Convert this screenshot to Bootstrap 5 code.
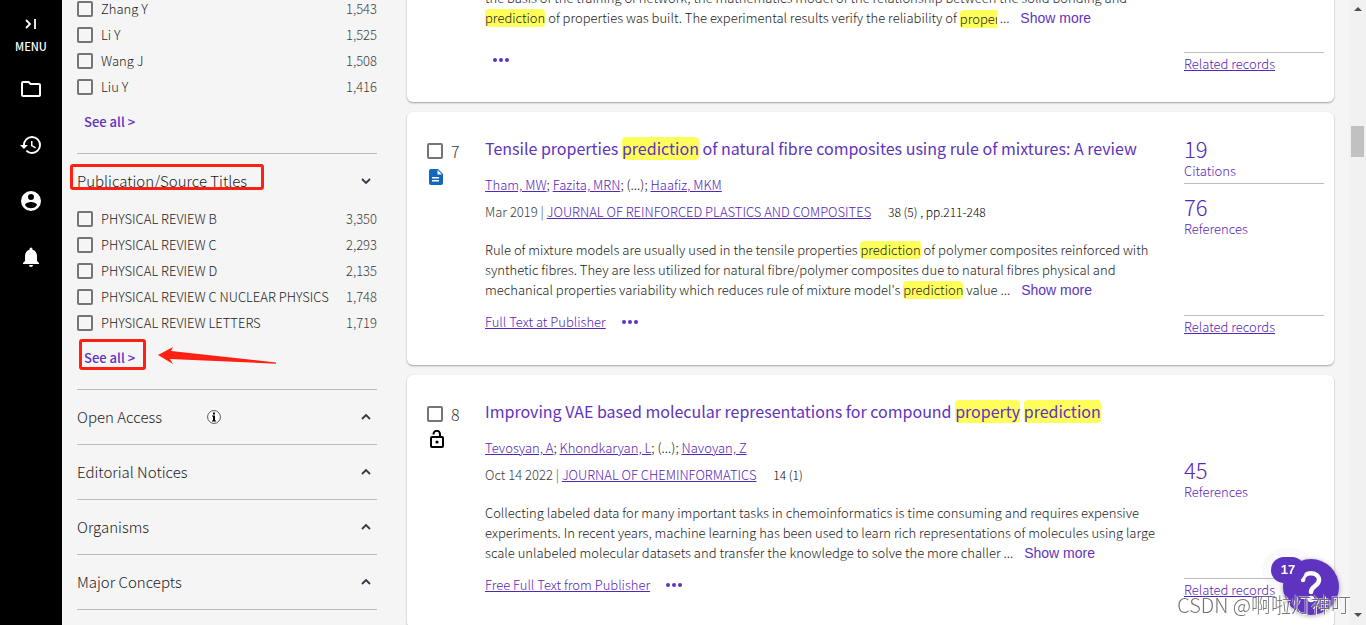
<!DOCTYPE html>
<html lang="en">
<head>
<meta charset="utf-8">
<meta name="viewport" content="width=device-width, initial-scale=1">
<title>Search results</title>
<link href="https://cdn.jsdelivr.net/npm/bootstrap@5.3.0/dist/css/bootstrap.min.css" rel="stylesheet">
<style>
:root{--brand:#5526b8;--ink:#1c1c1c;--soft:#3c3c3c;--rule:#bdbdbd}
body{font-family:"Noto Sans CJK SC","Noto Sans",sans-serif;font-size:13px;font-weight:300;line-height:20px;color:var(--ink);background:#f5f5f5}
a,.link-btn{color:var(--brand)}
a:hover{color:var(--brand)}
.rail{width:62px;background:#000}
.rail button{height:56px;color:#fff}
.rail .rail-menu{height:61px;padding-top:16px;font-size:11px;font-weight:500;line-height:20px}
.plain{background:none;border:0;padding:0;font-weight:inherit}
.filters{width:345px;padding:0 30px 0 15px}
.filters .rows{margin-top:-4px}
.filters .rows.after-head{margin-top:-2px}
.filter-row{height:26px;gap:8px}
.tick{appearance:none;width:16px;height:16px;border:2px solid #757575;border-radius:2px;background:transparent;margin:0;flex:none}
.num{color:var(--soft)}
.see-all{margin:12px 0 21px 7px;font-weight:500;color:#5e33bf;text-decoration:none;position:relative;align-self:flex-start}
.facet{height:55px;border-top:1px solid var(--rule);padding:0 4px 0 0;font-size:15px;color:var(--ink);position:relative;flex:none}
.facet.info svg.i{margin-left:45px}
.callout{position:absolute;border:3px solid #ff2014;border-radius:3px;pointer-events:none}
.callout-head{left:-7px;top:10px;width:194px;height:26px}
.callout-all{left:-5px;top:-9px;width:67px;height:31px}
.arrow{position:absolute;left:74px;top:-3px}
.results{padding-right:15px}
.results .stack{gap:10px;margin-top:-44px}
.record{background:#fff;border-radius:6px;box-shadow:0 1px 2px rgba(0,0,0,.35)}
.lead-col{width:78px;padding:31px 0 0 20px}
.rank{font-size:16px;line-height:16px;color:var(--soft);gap:8px}
.body-col{padding:24px 0 33px}
.rec-title{font-size:16px;line-height:24px;font-weight:400;margin:0 0 15px}
.rec-title a{text-decoration:none;color:#5e33bf}
.authors{margin-bottom:7px;color:#111}
.source{margin-bottom:18px;color:var(--soft)}
.vol{margin-left:14px;color:#000;font-size:12px}
.abstract{margin:0 0 12px;white-space:nowrap}
.first .abstract{margin-bottom:22px}
.first .body-col{padding:32px 0}
.hl{background:#ffff5c;border-radius:4px;display:inline-block;line-height:18px}
.rec-title .hl{line-height:23px}
.cut{width:37px;overflow:hidden;vertical-align:bottom;border-radius:4px 0 0 4px}
.show-more{font-family:"Liberation Sans",Arial,sans-serif;font-size:14px;line-height:18px;margin-left:8px;color:#5e33bf}
.dots{gap:2px;height:20px}
.dots i{width:4px;height:4px;border-radius:50%;background:#5e33bf}
.stats{width:140px;margin-right:10px;padding:14px 0 28px}
.stat{height:58px;padding-top:9px;color:var(--brand);border-bottom:1px solid transparent}
.stat.ruled{border-color:var(--rule)}
.stat b{font-weight:300;font-size:22px;line-height:26px}
.stat a{text-decoration:none}
.related{border-top:1px solid var(--rule);padding-top:1px}
.track{width:17px;background:#f1f1f1;padding:6px 0}
.thumb{width:13px;height:31px;background:#c1c1c1;margin-top:112px}
.help{right:27px;bottom:10px;width:56px;height:56px;background:#5e33bf;border-radius:50%;box-shadow:0 1px 5px rgba(0,0,0,.35)}
.count{right:61px;bottom:42px;width:34px;height:26px;border-radius:13px;background:#5e33bf;color:#fff;font:700 13px/26px "Liberation Sans",Arial,sans-serif;box-shadow:0 0 0 9px rgba(94,51,191,.03);z-index:2}
.stamp{right:15px;bottom:6px;font-size:20px;line-height:28px;color:rgba(110,110,110,.95);text-shadow:1px 1px 0 rgba(255,255,255,.9),-1px -1px 0 rgba(255,255,255,.45);white-space:nowrap;z-index:3;pointer-events:none}
</style>
</head>
<body>
<div class="d-flex vh-100 overflow-hidden">
  <nav class="rail d-flex flex-column flex-shrink-0" aria-label="Main">
    <button class="plain rail-menu d-flex flex-column align-items-center">
      <svg width="16" height="16" viewBox="0 0 16 16" fill="none" stroke="currentColor" stroke-width="1.800"><path d="M3 4l4 4-4 4M12 3v10"/></svg>
      <span class="mt-1">MENU</span>
    </button>
    <button class="plain d-flex align-items-center justify-content-center" aria-label="Lists"><svg width="24" height="24" viewBox="0 0 24 24" fill="currentColor"><path d="M9.170 6l2 2H20v10H4V6h5.170M10 4H4c-1.100 0-1.990.9-1.990 2L2 18c0 1.100.9 2 2 2h16c1.100 0 2-.9 2-2V8c0-1.100-.9-2-2-2h-8l-2-2z"/></svg></button>
    <button class="plain d-flex align-items-center justify-content-center" aria-label="History"><svg width="24" height="24" viewBox="0 0 24 24" fill="currentColor"><path d="M13 3a9 9 0 0 0-9 9H1l3.890 3.890.07.14L9 12H6c0-3.870 3.130-7 7-7s7 3.130 7 7-3.130 7-7 7c-1.930 0-3.680-.79-4.940-2.060l-1.420 1.420A8.950 8.950 0 0 0 13 21a9 9 0 0 0 0-18zm-1 5v5l4.280 2.540.72-1.210-3.500-2.080V8H12z"/></svg></button>
    <button class="plain d-flex align-items-center justify-content-center" aria-label="Profile"><svg width="24" height="24" viewBox="0 0 24 24" fill="currentColor"><path d="M12 2a10 10 0 1 0 0 20 10 10 0 0 0 0-20zm0 3a3 3 0 1 1 0 6 3 3 0 0 1 0-6zm0 14.200a7.200 7.200 0 0 1-6-3.220c.03-1.990 4-3.080 6-3.080s5.970 1.090 6 3.080a7.200 7.200 0 0 1-6 3.220z"/></svg></button>
    <button class="plain d-flex align-items-center justify-content-center" aria-label="Alerts"><svg width="24" height="24" viewBox="0 0 24 24" fill="currentColor"><path d="M12 22c1.100 0 2-.9 2-2h-4a2 2 0 0 0 2 2zm6-6v-5c0-3.070-1.640-5.640-4.500-6.320V4a1.500 1.500 0 0 0-3 0v.68C7.630 5.360 6 7.920 6 11v5l-2 2v1h16v-1l-2-2z"/></svg></button>
  </nav>

  <aside class="filters d-flex flex-column flex-shrink-0">
    <div class="rows">
      <div class="filter-row d-flex align-items-center"><input class="tick" type="checkbox" id="a1"><label for="a1">Zhang Y</label><span class="num ms-auto">1,543</span></div>
      <div class="filter-row d-flex align-items-center"><input class="tick" type="checkbox" id="a2"><label for="a2">Li Y</label><span class="num ms-auto">1,525</span></div>
      <div class="filter-row d-flex align-items-center"><input class="tick" type="checkbox" id="a3"><label for="a3">Wang J</label><span class="num ms-auto">1,508</span></div>
      <div class="filter-row d-flex align-items-center"><input class="tick" type="checkbox" id="a4"><label for="a4">Liu Y</label><span class="num ms-auto">1,416</span></div>
    </div>
    <a class="see-all" href="#">See all &gt;</a>
    <button class="plain facet border-bottom-0 d-flex align-items-center w-100" type="button">
      <span>Publication/Source Titles</span>
      <svg class="ms-auto" width="14" height="14" viewBox="0 0 14 14" fill="none" stroke="#333a42" stroke-width="1.800"><path d="M3 5l4 4 4-4"/></svg>
      <span class="callout callout-head"></span>
    </button>
    <div class="rows after-head">
      <div class="filter-row d-flex align-items-center"><input class="tick" type="checkbox" id="s1"><label for="s1">PHYSICAL REVIEW B</label><span class="num ms-auto">3,350</span></div>
      <div class="filter-row d-flex align-items-center"><input class="tick" type="checkbox" id="s2"><label for="s2">PHYSICAL REVIEW C</label><span class="num ms-auto">2,293</span></div>
      <div class="filter-row d-flex align-items-center"><input class="tick" type="checkbox" id="s3"><label for="s3">PHYSICAL REVIEW D</label><span class="num ms-auto">2,135</span></div>
      <div class="filter-row d-flex align-items-center"><input class="tick" type="checkbox" id="s4"><label for="s4">PHYSICAL REVIEW C NUCLEAR PHYSICS</label><span class="num ms-auto">1,748</span></div>
      <div class="filter-row d-flex align-items-center"><input class="tick" type="checkbox" id="s5"><label for="s5">PHYSICAL REVIEW LETTERS</label><span class="num ms-auto">1,719</span></div>
    </div>
    <a class="see-all" href="#">See all &gt;<span class="callout callout-all"></span>
      <svg class="arrow" width="120" height="24" viewBox="0 0 120 24" fill="#ff2014"><path d="M0 10L15 2l-2 4L118 17.500v1.200L12 14l3 5z"/></svg></a>
    <button class="plain facet info d-flex align-items-center w-100" type="button"><span>Open Access</span>
      <svg class="i" width="14" height="14" viewBox="0 0 14 14"><circle cx="7" cy="7" r="6.400" fill="#fff" stroke="#444" stroke-width=".9"/><path d="M6 2.500h2v2H6zM5 5.500h3v5h1v1H5v-1h1v-4H5z"/></svg>
      <svg class="ms-auto" width="14" height="14" viewBox="0 0 14 14" fill="none" stroke="#333a42" stroke-width="1.800"><path d="M3 9l4-4 4 4"/></svg></button>
    <button class="plain facet d-flex align-items-center w-100" type="button"><span>Editorial Notices</span><svg class="ms-auto" width="14" height="14" viewBox="0 0 14 14" fill="none" stroke="#333a42" stroke-width="1.800"><path d="M3 9l4-4 4 4"/></svg></button>
    <button class="plain facet d-flex align-items-center w-100" type="button"><span>Organisms</span><svg class="ms-auto" width="14" height="14" viewBox="0 0 14 14" fill="none" stroke="#333a42" stroke-width="1.800"><path d="M3 9l4-4 4 4"/></svg></button>
    <button class="plain facet d-flex align-items-center w-100" type="button"><span>Major Concepts</span><svg class="ms-auto" width="14" height="14" viewBox="0 0 14 14" fill="none" stroke="#333a42" stroke-width="1.800"><path d="M3 9l4-4 4 4"/></svg></button>
    <div class="facet"></div>
  </aside>

  <main class="results flex-grow-1">
    <div class="stack d-flex flex-column">
      <article class="record first d-flex">
        <div class="lead-col flex-shrink-0"></div>
        <div class="body-col flex-grow-1">
          <p class="abstract">the basis of the training of network, the mathematics model of the relationship between the solid bonding and<br><span class="hl">prediction</span> of properties was built. The experimental results verify the reliability of <span class="hl cut">proper</span> ... <button class="plain link-btn show-more">Show more</button></p>
          <div class="d-flex align-items-center"><button class="plain dots d-flex align-items-center ms-2" aria-label="More"><i></i><i></i><i></i></button></div>
        </div>
        <div class="stats d-flex flex-column flex-shrink-0"><div class="related mt-auto"><a href="#">Related records</a></div></div>
      </article>

      <article class="record d-flex">
        <div class="lead-col flex-shrink-0">
          <div class="rank d-flex align-items-center"><input class="tick" type="checkbox" id="r7"><label for="r7">7</label></div>
          <svg class="d-block mt-2" width="20" height="20" viewBox="0 0 20 20"><path d="M4 2h7l5 5v9a2 2 0 0 1-2 2H4a2 2 0 0 1-2-2V4a2 2 0 0 1 2-2z" fill="#1266bf"/><path d="M10.500 3v4.500H15zM5 10h7v1.500H5zM5 13h7v1.500H5z" fill="#fff"/></svg>
        </div>
        <div class="body-col flex-grow-1">
          <h3 class="rec-title"><a href="#">Tensile properties <span class="hl">prediction</span> of natural fibre composites using rule of mixtures: A review</a></h3>
          <div class="authors"><a href="#">Tham, MW</a>; <a href="#">Fazita, MRN</a>; (...); <a href="#">Haafiz, MKM</a></div>
          <div class="source">Mar 2019 | <a href="#">JOURNAL OF REINFORCED PLASTICS AND COMPOSITES</a> <span class="vol">38 (5) , pp.211-248</span></div>
          <p class="abstract">Rule of mixture models are usually used in the tensile properties <span class="hl">prediction</span> of polymer composites reinforced with<br>synthetic fibres. They are less utilized for natural fibre/polymer composites due to natural fibres physical and<br>mechanical properties variability which reduces rule of mixture model's <span class="hl">prediction</span> value ... <button class="plain link-btn show-more">Show more</button></p>
          <div class="d-flex align-items-center"><a href="#">Full Text at Publisher</a><button class="plain dots d-flex align-items-center ms-3" aria-label="More"><i></i><i></i><i></i></button></div>
        </div>
        <div class="stats d-flex flex-column flex-shrink-0">
          <div class="stat ruled d-flex flex-column"><b>19</b><a href="#">Citations</a></div>
          <div class="stat d-flex flex-column"><b>76</b><a href="#">References</a></div>
          <div class="related mt-auto"><a href="#">Related records</a></div>
        </div>
      </article>

      <article class="record d-flex">
        <div class="lead-col flex-shrink-0">
          <div class="rank d-flex align-items-center"><input class="tick" type="checkbox" id="r8"><label for="r8">8</label></div>
          <svg class="d-block mt-2" width="20" height="20" viewBox="0 0 20 20" fill="none" stroke="#000" stroke-width="2"><rect x="4" y="7" width="12" height="10" rx="1"/><path d="M6.500 4.500V4a3.200 3.200 0 0 1 6.500 0v3"/><circle cx="10" cy="12" r="1.600" fill="#000" stroke="none"/></svg>
        </div>
        <div class="body-col flex-grow-1">
          <h3 class="rec-title"><a href="#">Improving VAE based molecular representations for compound <span class="hl">property</span> <span class="hl">prediction</span></a></h3>
          <div class="authors"><a href="#">Tevosyan, A</a>; <a href="#">Khondkaryan, L</a>; (...); <a href="#">Navoyan, Z</a></div>
          <div class="source">Oct 14 2022 | <a href="#">JOURNAL OF CHEMINFORMATICS</a> <span class="vol">14 (1)</span></div>
          <p class="abstract">Collecting labeled data for many important tasks in chemoinformatics is time consuming and requires expensive<br>experiments. In recent years, machine learning has been used to learn rich representations of molecules using large<br>scale unlabeled molecular datasets and transfer the knowledge to solve the more challer ... <button class="plain link-btn show-more">Show more</button></p>
          <div class="d-flex align-items-center"><a href="#">Free Full Text from Publisher</a><button class="plain dots d-flex align-items-center ms-3" aria-label="More"><i></i><i></i><i></i></button></div>
        </div>
        <div class="stats d-flex flex-column flex-shrink-0">
          <div class="stat"></div>
          <div class="stat d-flex flex-column"><b>45</b><a href="#">References</a></div>
          <div class="related mt-auto"><a href="#">Related records</a></div>
        </div>
      </article>
    </div>
  </main>

  <div class="track d-flex flex-column align-items-center flex-shrink-0" aria-hidden="true">
    <svg width="8" height="8" viewBox="0 0 8 8" fill="#505050"><path d="M0 5l4-4 4 4z"/></svg>
    <div class="thumb"></div>
    <svg class="mt-auto" width="8" height="8" viewBox="0 0 8 8" fill="#505050"><path d="M0 2l4 4 4-4z"/></svg>
  </div>
</div>

<div class="count position-fixed text-center">17</div>
<button class="plain help position-fixed d-flex align-items-center justify-content-center" aria-label="Help">
  <svg width="28" height="34" viewBox="0 0 28 34" fill="none" stroke="#fff" stroke-width="4.500" stroke-linecap="round"><path d="M6 10c0-9 16-9 16 0 0 6-8 6-8 12"/><circle cx="14" cy="29" r="1" fill="#fff"/></svg>
</button>
<div class="stamp position-fixed">CSDN @啊啦灯神叮</div>
<script src="https://cdn.jsdelivr.net/npm/bootstrap@5.3.0/dist/js/bootstrap.bundle.min.js"></script>
</body>
</html>
